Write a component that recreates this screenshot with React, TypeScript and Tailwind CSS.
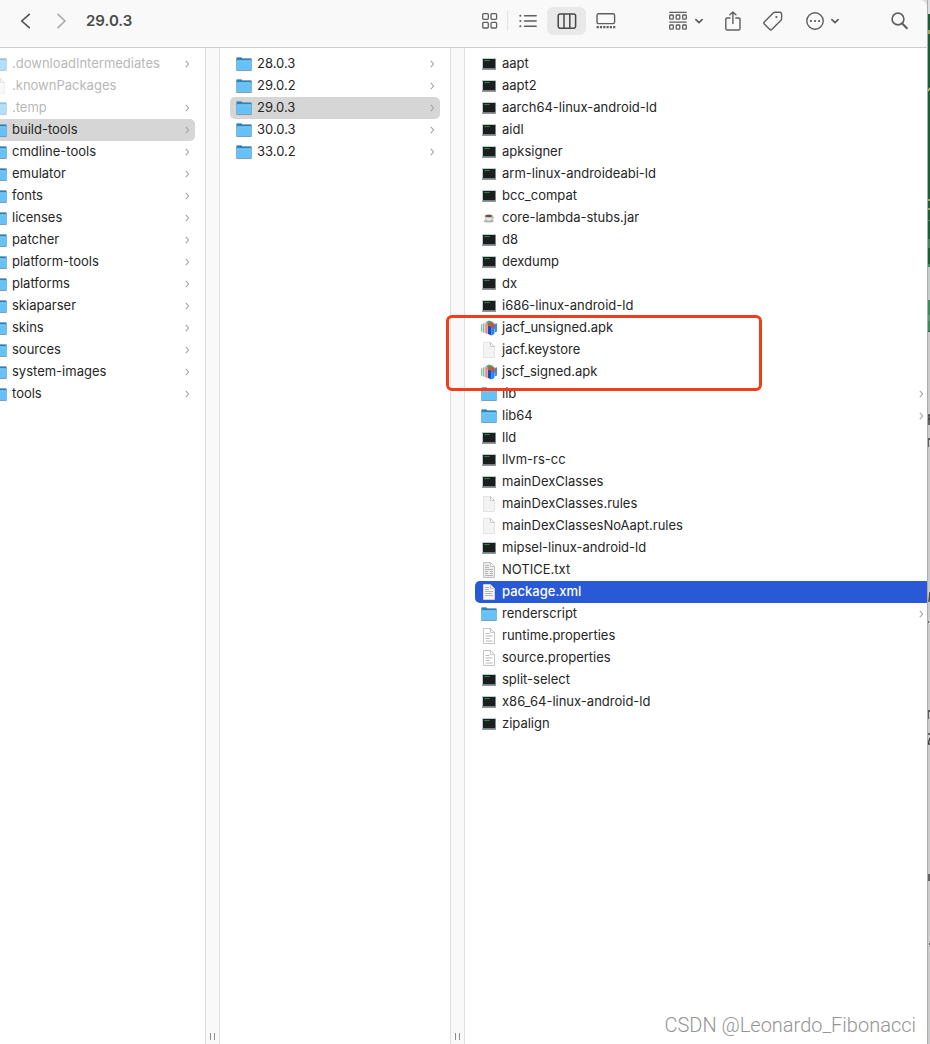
import { useState } from "react";

type Kind = "folder" | "exec" | "jar" | "apk" | "blank" | "text" | "xml" | "props";

type Entry = {
    name: string;
    kind: Kind;
    hidden?: boolean;
};

const sdkFolders: Entry[] = [
    { name: ".downloadIntermediates", kind: "folder", hidden: true },
    { name: ".knownPackages", kind: "blank", hidden: true },
    { name: ".temp", kind: "folder", hidden: true },
    { name: "build-tools", kind: "folder" },
    { name: "cmdline-tools", kind: "folder" },
    { name: "emulator", kind: "folder" },
    { name: "fonts", kind: "folder" },
    { name: "licenses", kind: "folder" },
    { name: "patcher", kind: "folder" },
    { name: "platform-tools", kind: "folder" },
    { name: "platforms", kind: "folder" },
    { name: "skiaparser", kind: "folder" },
    { name: "skins", kind: "folder" },
    { name: "sources", kind: "folder" },
    { name: "system-images", kind: "folder" },
    { name: "tools", kind: "folder" },
];

const versions: Entry[] = [
    { name: "28.0.3", kind: "folder" },
    { name: "29.0.2", kind: "folder" },
    { name: "29.0.3", kind: "folder" },
    { name: "30.0.3", kind: "folder" },
    { name: "33.0.2", kind: "folder" },
];

const files: Entry[] = [
    { name: "aapt", kind: "exec" },
    { name: "aapt2", kind: "exec" },
    { name: "aarch64-linux-android-ld", kind: "exec" },
    { name: "aidl", kind: "exec" },
    { name: "apksigner", kind: "exec" },
    { name: "arm-linux-androideabi-ld", kind: "exec" },
    { name: "bcc_compat", kind: "exec" },
    { name: "core-lambda-stubs.jar", kind: "jar" },
    { name: "d8", kind: "exec" },
    { name: "dexdump", kind: "exec" },
    { name: "dx", kind: "exec" },
    { name: "i686-linux-android-ld", kind: "exec" },
    { name: "jacf_unsigned.apk", kind: "apk" },
    { name: "jacf.keystore", kind: "blank" },
    { name: "jscf_signed.apk", kind: "apk" },
    { name: "lib", kind: "folder" },
    { name: "lib64", kind: "folder" },
    { name: "lld", kind: "exec" },
    { name: "llvm-rs-cc", kind: "exec" },
    { name: "mainDexClasses", kind: "exec" },
    { name: "mainDexClasses.rules", kind: "blank" },
    { name: "mainDexClassesNoAapt.rules", kind: "blank" },
    { name: "mipsel-linux-android-ld", kind: "exec" },
    { name: "NOTICE.txt", kind: "text" },
    { name: "package.xml", kind: "xml" },
    { name: "renderscript", kind: "folder" },
    { name: "runtime.properties", kind: "props" },
    { name: "source.properties", kind: "props" },
    { name: "split-select", kind: "exec" },
    { name: "x86_64-linux-android-ld", kind: "exec" },
    { name: "zipalign", kind: "exec" },
];

const Page = ({ fill, stroke, lines }: { fill: string; stroke: string; lines?: string }) => (
    <>
        <path d="M2.5 .5h7l4 4v11h-11z" fill={fill} stroke={stroke} strokeWidth=".8" />
        <path d="M9.5 .5v4h4z" fill="#fff" stroke="#bdbdbd" strokeWidth=".8" />
        {lines && <path d={lines} stroke="#a8a8a8" strokeWidth=".8" fill="none" />}
    </>
);

const FileIcon = ({ kind }: { kind: Kind }) => (
    <svg className="h-4 w-4 shrink-0" viewBox="0 0 16 16" aria-hidden="true">
        {kind === "folder" && (
            <>
                <path d="M.5 2.2q0-.8.8-.8h4l1.2 1.1h8.2q.8 0 .8.8v2H.5z" fill="#2583bf" stroke="#7d97a8" strokeWidth=".6" />
                <path d="M.4 4.4h15.2v9.4q0 .7-.7.7H1.1q-.7 0-.7-.7z" fill="#67c1f5" stroke="#5b9fc8" strokeWidth=".6" />
                <path d="M.8 4.9h14.4" stroke="#8ad3fb" strokeWidth=".8" />
                <path d="M.6 14.6h14.8" stroke="#88949b" strokeWidth=".8" />
            </>
        )}
        {kind === "exec" && (
            <>
                <path d="M1 2h14v12H1z" fill="#b9cfd1" />
                <path d="M2 3h12.4v9.5H2z" fill="#1c1d1f" />
                <path d="M1 12.6h14V14H1z" fill="#8f9496" />
                <path d="M3.5 4.6h5" stroke="#3fae49" strokeWidth="1" strokeDasharray="1.4 .5" />
            </>
        )}
        {kind === "jar" && (
            <>
                <ellipse cx="7.8" cy="11" rx="5" ry="1.5" fill="#b5b5b5" />
                <path d="M4 6h7.4q0 5-3.7 5.2Q4 11 4 6z" fill="#e8e8e8" stroke="#999" strokeWidth=".5" />
                <path d="M11.2 7.2q2.2-.3 1.4 1-.7 1-2 .9" fill="none" stroke="#999" strokeWidth=".7" />
                <ellipse cx="7.7" cy="6" rx="3.7" ry="1.3" fill="#5a4334" stroke="#aaa" strokeWidth=".5" />
            </>
        )}
        {kind === "apk" && (
            <>
                <path d="M.2 4.4 1.2 4v8l-1-.4z" fill="#45c98b" />
                <path d="M1.8 3.6 3 3.2v9.6l-1.2-.5z" fill="#6fc9a4" />
                <path d="M3.4 3.2 5 2.6v10.8l-1.6-.6z" fill="#f0a0a0" />
                <path d="M5.2 3.6 6.6 3v11.2l-1.4-.6z" fill="#d96d72" />
                <path d="M4.5 2.200 8 .6l5 1.600-4 1.800z" fill="#36b37e" />
                <path d="M6 3.400 9.500 2l4 1.500.5 3L11 8 7 5.500z" fill="#b9613c" />
                <path d="m7 5.400 3.600 1.700v8.300L7 13.900z" fill="#1450bd" />
                <path d="m10.600 7.100 2.800-1.300v8.300l-2.800 1.300z" fill="#2583f4" />
                <path d="M13.600 4 16 3.200v8.200l-2.400 1.200z" fill="#3f88ea" />
                <path d="M11.200 4.200 14 5v3.400l-1.500.8V6z" fill="#c05d32" />
            </>
        )}
        {kind === "blank" && <Page fill="#f3f3f3" stroke="#dedede" />}
        {kind === "text" && <Page fill="#ececec" stroke="#b5b5b5" lines="M4 3.5h4M4 5.5h4M4 7.5h8M4 9.5h3M9 9.5h3M4 11.5h3M9 11.5h3M4 13.5h8" />}
        {kind === "xml" && <Page fill="#f4f4f4" stroke="#dddddd" lines="M4 3.5h4M4 5.5h4M4 7.5h8M4 9.5h7M4 11.5h8" />}
        {kind === "props" && <Page fill="#fff" stroke="#b5b5b5" lines="M4.5 5.5h4M4.5 8h7M4.5 10.5h4M4.5 13h7" />}
    </svg>
);

const Arrow = () => (
    <svg className="h-2 w-1.5 shrink-0" viewBox="0 0 6 8" fill="none" stroke="#a3a3a3" strokeWidth="1.1" aria-hidden="true">
        <path d="M1.8.8 4.6 4 1.800 7.200" />
    </svg>
);

const Chevron = () => (
    <svg className="h-2 w-2" viewBox="0 0 8 8" fill="none" stroke="#5f5f5f" strokeWidth="1.7" strokeLinecap="round" strokeLinejoin="round">
        <path d="M.9 2.6 4 5.6l3.1-3" />
    </svg>
);

type ColumnProps = {
    label: string;
    entries: Entry[];
    selected: string;
    onSelect: (name: string) => void;
    active?: boolean;
};

const Column = ({ label, entries, selected, onSelect, active }: ColumnProps) => (
    <ul aria-label={label} className={active ? "pt-[5px] pl-2.5" : "pt-[5px] px-2.5"}>
        {entries.map((entry) => {
            const isSelected = entry.name === selected;
            let look = "rounded-[5px] text-[#262626]";
            if (isSelected) look = active ? "rounded-l-[5px] bg-[#2a59d8] text-white font-medium" : "rounded-[5px] bg-[#d6d6d6] text-[#262626]";
            return (
                <li key={entry.name}>
                    <button
                        type="button"
                        onClick={() => onSelect(entry.name)}
                        className={`flex h-[22px] w-full items-center gap-[5px] pl-1.5 text-left text-[13px] leading-4 ${active ? "pr-[3px]" : "pr-[5px]"} ${look}`}
                    >
                        <span className={entry.hidden ? "opacity-50" : ""}>
                            <FileIcon kind={entry.kind} />
                        </span>
                        <span className={entry.hidden ? "grow pb-0.5 whitespace-nowrap text-[#b8b8b8]" : "grow pb-0.5 whitespace-nowrap"}>{entry.name}</span>
                        {entry.kind === "folder" && <Arrow />}
                    </button>
                </li>
            );
        })}
    </ul>
);

const Divider = () => (
    <div className="flex w-[15px] shrink-0 items-end justify-center gap-[3px] border-x border-[#e0e0e0] bg-[#f9f9f9] pb-1">
        <span className="h-[7px] w-px bg-[#8e8e8e]" />
        <span className="h-[7px] w-px bg-[#8e8e8e]" />
    </div>
);

const Toolbar = () => (
    <header className="flex h-12 items-center border-b border-[#cfcfcf] bg-[#f9f9f9] pr-[19px] pb-[6px] pl-5 text-[#5f5f5f]">
        <button type="button" aria-label="Back">
            <svg className="h-4 w-[11px]" viewBox="0 0 11 16" fill="none" stroke="#4d4d4d" strokeWidth="1.6" strokeLinecap="round" strokeLinejoin="round">
                <path d="M9.3 1.3 1.7 8l7.6 6.7" />
            </svg>
        </button>
        <button type="button" aria-label="Forward" className="ml-[25px]">
            <svg className="h-4 w-[11px]" viewBox="0 0 11 16" fill="none" stroke="#a9a9a9" strokeWidth="1.6" strokeLinecap="round" strokeLinejoin="round">
                <path d="M2 1.3 9 8l-7 6.7" />
            </svg>
        </button>
        <h1 className="ml-[19px] text-[15px] leading-5 font-semibold text-[#4a4a4a]">29.0.3</h1>

        <div className="ml-auto flex items-center">
            <button type="button" aria-label="Icons" className="flex h-7 w-[34px] items-center justify-center">
                <svg className="h-4 w-4" viewBox="0 0 16 16" fill="none" stroke="currentColor" strokeWidth="1.3">
                    <rect x=".7" y=".7" width="5.6" height="5.6" rx="1" />
                    <rect x="9" y=".7" width="5.6" height="5.6" rx="1" />
                    <rect x=".7" y="9.4" width="5.6" height="5.6" rx="1" />
                    <rect x="9" y="9.4" width="5.6" height="5.6" rx="1" />
                </svg>
            </button>
            <span className="h-5 w-px bg-[#e3e3e3]" />
            <button type="button" aria-label="List" className="flex h-7 w-[39px] items-center justify-center">
                <svg className="h-4 w-[18px]" viewBox="0 0 18 16" fill="none" stroke="currentColor" strokeWidth="1.4" strokeLinecap="round">
                    <path d="M5.5 2.8h11.7M5.5 8h11.7M5.5 13.2h11.7" />
                    <path d="M1.3 2.8h.1M1.3 8h.1M1.3 13.2h.1" strokeWidth="2" />
                </svg>
            </button>
            <button type="button" aria-label="Columns" aria-pressed="true" className="flex h-7 w-[39px] items-center justify-center rounded-md bg-[#e9e9e9]">
                <svg className="h-4 w-5" viewBox="0 0 20 16" fill="none" stroke="#474747" strokeWidth="1.5">
                    <rect x="1.2" y=".9" width="17.4" height="14.4" rx="2" />
                    <path d="M7 1v14M12.8 1v14" />
                </svg>
            </button>
            <button type="button" aria-label="Gallery" className="flex h-7 w-[39px] items-center justify-center">
                <svg className="h-4 w-5" viewBox="0 0 20 16" fill="none" stroke="currentColor" strokeWidth="1.4">
                    <rect x="1" y=".8" width="17.6" height="9.8" rx="1.6" />
                    <path d="M.6 14.2h18.8" strokeWidth="2.2" strokeDasharray="2.2 1.1" />
                </svg>
            </button>
            <button type="button" aria-label="Group items" className="ml-[44px] flex items-center gap-2">
                <svg className="h-5 w-[18px]" viewBox="0 0 18 20" fill="none" stroke="currentColor" strokeWidth="1.3">
                    <path d="M.3 1.4h17.4M.3 11.1h17.4" />
                    <rect x=".7" y="4" width="3.6" height="4.2" rx=".8" />
                    <rect x="7.2" y="4" width="3.6" height="4.2" rx=".8" />
                    <rect x="13.7" y="4" width="3.6" height="4.2" rx=".8" />
                    <rect x=".7" y="14" width="3.6" height="4.2" rx=".8" />
                    <rect x="7.2" y="14" width="3.6" height="4.2" rx=".8" />
                    <rect x="13.7" y="14" width="3.6" height="4.2" rx=".8" />
                </svg>
                <Chevron />
            </button>
            <button type="button" aria-label="Share" className="ml-[22px]">
                <svg className="h-5 w-4" viewBox="0 0 16 20" fill="none" stroke="currentColor" strokeWidth="1.4" strokeLinecap="round" strokeLinejoin="round">
                    <path d="M5 7H2.2Q.8 7 .8 8.4v9q0 1.6 1.4 1.6h11.4q1.4 0 1.4-1.6v-9Q15 7 13.6 7H10.8" />
                    <path d="M7.9 12.5V1M4.9 3.8 7.9.9l3 2.9" />
                </svg>
            </button>
            <button type="button" aria-label="Tags" className="ml-[22px]">
                <svg className="h-5 w-5" viewBox="0 0 20 20" fill="none" stroke="currentColor" strokeWidth="1.4" strokeLinejoin="round">
                    <path d="M1.3 10.9 10.2 2q.8-.8 2-.8h4.4q2 0 2 2v4.3q0 1.2-.8 2L9 18.3q-1.2 1.2-2.4 0l-5.3-5.2q-1-1.1 0-2.2z" />
                    <circle cx="13.4" cy="6.1" r="1.1" fill="currentColor" stroke="none" />
                </svg>
            </button>
            <button type="button" aria-label="More" className="ml-[23px] flex items-center gap-[7px]">
                <svg className="h-5 w-[18px]" viewBox="0 0 18 20" fill="none" stroke="currentColor" strokeWidth="1.4">
                    <circle cx="9" cy="10" r="8.2" />
                    <path d="M4.9 10h.1M9 10h.1M13 10h.1" strokeWidth="2.2" strokeLinecap="round" />
                </svg>
                <Chevron />
            </button>
            <button type="button" aria-label="Search" className="ml-[52px]">
                <svg className="h-[18px] w-[17px]" viewBox="0 0 17 18" fill="none" stroke="currentColor" strokeWidth="1.6" strokeLinecap="round">
                    <circle cx="7" cy="7" r="5.9" />
                    <path d="m11.3 11.5 4.5 4.8" strokeWidth="2" />
                </svg>
            </button>
        </div>
    </header>
);

// sliver of the browser window that sits behind this one
const Backdrop = () => (
    <div className="relative flex w-[3px] shrink-0 flex-col border-l border-[#adadad] bg-[#cbcbcb]" aria-hidden="true">
        <span className="h-3.5 bg-[#dedede]" />
        <span className="h-[206px] bg-[#1b5e35]" />
        <span className="h-11 border-t border-[#4d8562] bg-[#1b5e35]" />
        <span className="h-[3px] bg-[#3c8a5d]" />
        <span className="h-[33px] bg-[#c4cdc9]" />
        <span className="h-8 border-b border-[#245c3c] bg-[#3c8a5d]" />
        <svg className="absolute top-0 left-0 h-[960px] w-0.5" viewBox="0 0 2 960" fill="none">
            <path d="M0 91l2-3M1 199v2M0 209h2M1 30v4" stroke="#cdbf72" strokeWidth="1.5" />
            <path d="M1 239v9M1 315v6" stroke="#79a58a" />
            <path d="M0 415h2M0 419h2M1 415v10M0 439v8M0 439h2M1 602l1-10M0 622h1M0 711v8M0 711h2M0 734h2M2 738l-2 6h2M1 874v7M1 944h1" stroke="#404040" strokeWidth="1.5" />
        </svg>
    </div>
);

const App = () => {
    const [folder, setFolder] = useState<string>("build-tools");
    const [version, setVersion] = useState<string>("29.0.3");
    const [file, setFile] = useState<string>("package.xml");

    return (
        <div className="relative flex min-h-screen overflow-hidden bg-[#dedede] font-['Inter',sans-serif]">
            <main className="flex min-w-0 grow flex-col overflow-hidden rounded-tr-[8px] bg-white">
                <Toolbar />
                <div className="flex grow">
                    {/* first column is scrolled a little to the right */}
                    <div className="w-[205px] shrink-0 overflow-hidden">
                        <div className="-ml-[25px]">
                            <Column label="sdk" entries={sdkFolders} selected={folder} onSelect={setFolder} />
                        </div>
                    </div>
                    <Divider />
                    <div className="w-[230px] shrink-0">
                        <Column label="build-tools" entries={versions} selected={version} onSelect={setVersion} />
                    </div>
                    <Divider />
                    <div className="relative min-w-0 grow">
                        <Column label="29.0.3" entries={files} selected={file} onSelect={setFile} active />
                        <div className="pointer-events-none absolute top-[267px] -left-[19px] h-[76px] w-[316px] rounded-md border-3 border-[#f23c1c]" />
                    </div>
                </div>
            </main>
            <Backdrop />
            <p className="absolute right-[14px] bottom-[7px] font-['Roboto',sans-serif] text-[20px] leading-6 font-light text-[#949494]">
                CSDN @Leonardo_Fibonacci
            </p>
        </div>
    );
};

export default App;
